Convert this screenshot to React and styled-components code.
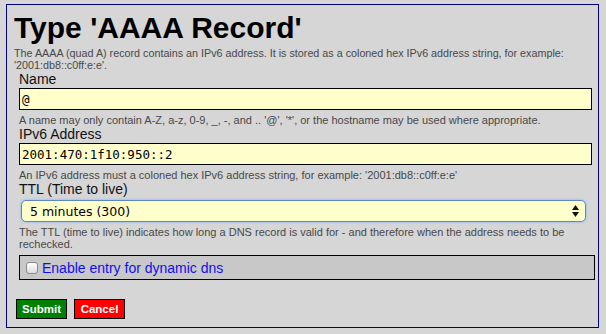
import React from 'react';
import styled, { createGlobalStyle } from 'styled-components';

const GlobalStyle = createGlobalStyle`
  html, body {
    margin: 0;
    padding: 0;
    background: #d6d6d6;
  }
  body {
    font-family: "Liberation Sans", Arial, sans-serif;
  }
`;

const Panel = styled.form`
  box-sizing: border-box;
  width: 593px;
  height: 324px;
  margin: 4px 0 0 6px;
  padding: 7px 7px 8px 7px;
  border: 1px solid #000080;
  display: flex;
  flex-direction: column;
`;

const Title = styled.h1`
  margin: 0;
  font-size: 30px;
  line-height: 32px;
  font-weight: bold;
  color: #000;
`;

const Note = styled.p`
  margin: ${(p) => (p.$top ? '3px' : '4px')} 0 0 0;
  font-size: ${(p) => (p.$top ? '10.75px' : '11px')};
  line-height: 12px;
  color: #484848;
`;

const Fields = styled.div`
  display: flex;
  flex-direction: column;
  margin-left: 5px;
`;

const Label = styled.label`
  display: block;
  font-size: 14px;
  line-height: 17px;
  color: #111;
`;

const TextInput = styled.input`
  box-sizing: border-box;
  width: 573px;
  height: 22px;
  margin: 0;
  padding: 0 2px;
  border: 1px solid #000;
  background: #ffffcc;
  font-family: "DejaVu Sans Mono", monospace;
  font-size: 12.5px;
  color: #000;
  outline: none;
`;

const SelectWrap = styled.div`
  position: relative;
  width: 565px;
  margin: 2px 0 0 2px;
`;

const Select = styled.select`
  box-sizing: border-box;
  appearance: none;
  width: 100%;
  height: 22px;
  margin: 0;
  padding: 0 0 0 8px;
  border: 1px solid #5f86bd;
  border-radius: 5px;
  box-shadow: 0 0 2px 1px #a9c6ec;
  background: #ffffcc;
  font-family: "DejaVu Sans", sans-serif;
  font-size: 12.5px;
  color: #000;
  outline: none;
`;

const Arrows = styled.svg`
  position: absolute;
  right: 7px;
  top: 5px;
  pointer-events: none;
`;

const CheckRow = styled.div`
  box-sizing: border-box;
  display: flex;
  align-items: center;
  gap: 4px;
  width: 576px;
  height: 25px;
  margin-top: 5px;
  padding-left: 6px;
  border: 1px solid #000;
  background: #c8c8c8;
`;

const Check = styled.input`
  appearance: none;
  box-sizing: border-box;
  width: 12px;
  height: 12px;
  margin: 1px 0 0 0;
  border: 1px solid #8a8a8a;
  border-radius: 3px;
  background: linear-gradient(#ffffff, #dcdcdc);
`;

const CheckLabel = styled.label`
  font-size: 14px;
  color: #1010ee;
`;

const Actions = styled.div`
  display: flex;
  gap: 7px;
  margin: auto 0 0 2px;
`;

const Button = styled.button`
  box-sizing: border-box;
  height: 20px;
  width: ${(p) => p.$w}px;
  padding: 0;
  border: 1px solid #000;
  background: ${(p) => p.$bg};
  color: #fff;
  font-family: "Liberation Sans", Arial, sans-serif;
  font-weight: bold;
  font-size: 11.5px;
  cursor: pointer;
`;

const Field = ({ label, children, help }) => (
  <>
    <Label>{label}</Label>
    {children}
    <Note>{help}</Note>
  </>
);

const App = () => (
  <>
    <GlobalStyle />
    <Panel onSubmit={(e) => e.preventDefault()}>
      <Title>Type 'AAAA Record'</Title>
      <Note $top>
        The AAAA (quad A) record contains an IPv6 address. It is stored as a coloned hex IPv6
        address string, for example: '2001:db8::c0ff:e:e'.
      </Note>
      <Fields>
        <Field
          label="Name"
          help="A name may only contain A-Z, a-z, 0-9, _, -, and .. '@', '*', or the hostname may be used where appropriate."
        >
          <TextInput defaultValue="@" />
        </Field>
        <Field
          label="IPv6 Address"
          help="An IPv6 address must a coloned hex IPv6 address string, for example: '2001:db8::c0ff:e:e'"
        >
          <TextInput defaultValue="2001:470:1f10:950::2" />
        </Field>
        <Field
          label="TTL (Time to live)"
          help="The TTL (time to live) indicates how long a DNS record is valid for - and therefore when the address needs to be rechecked."
        >
          <SelectWrap>
            <Select defaultValue="300">
              <option value="60">1 minute (60)</option>
              <option value="300">5 minutes (300)</option>
              <option value="3600">1 hour (3600)</option>
            </Select>
            <Arrows width="7" height="12" viewBox="0 0 7 12">
              <path d="M3.5 0 L7 5 L0 5 Z" fill="#111" />
              <path d="M0 7 L7 7 L3.5 12 Z" fill="#111" />
            </Arrows>
          </SelectWrap>
        </Field>
        <CheckRow>
          <Check type="checkbox" id="dyn" />
          <CheckLabel htmlFor="dyn">Enable entry for dynamic dns</CheckLabel>
        </CheckRow>
      </Fields>
      <Actions>
        <Button type="submit" $bg="#008000" $w={51}>Submit</Button>
        <Button type="button" $bg="#ff0000" $w={51}>Cancel</Button>
      </Actions>
    </Panel>
  </>
);

export default App;
